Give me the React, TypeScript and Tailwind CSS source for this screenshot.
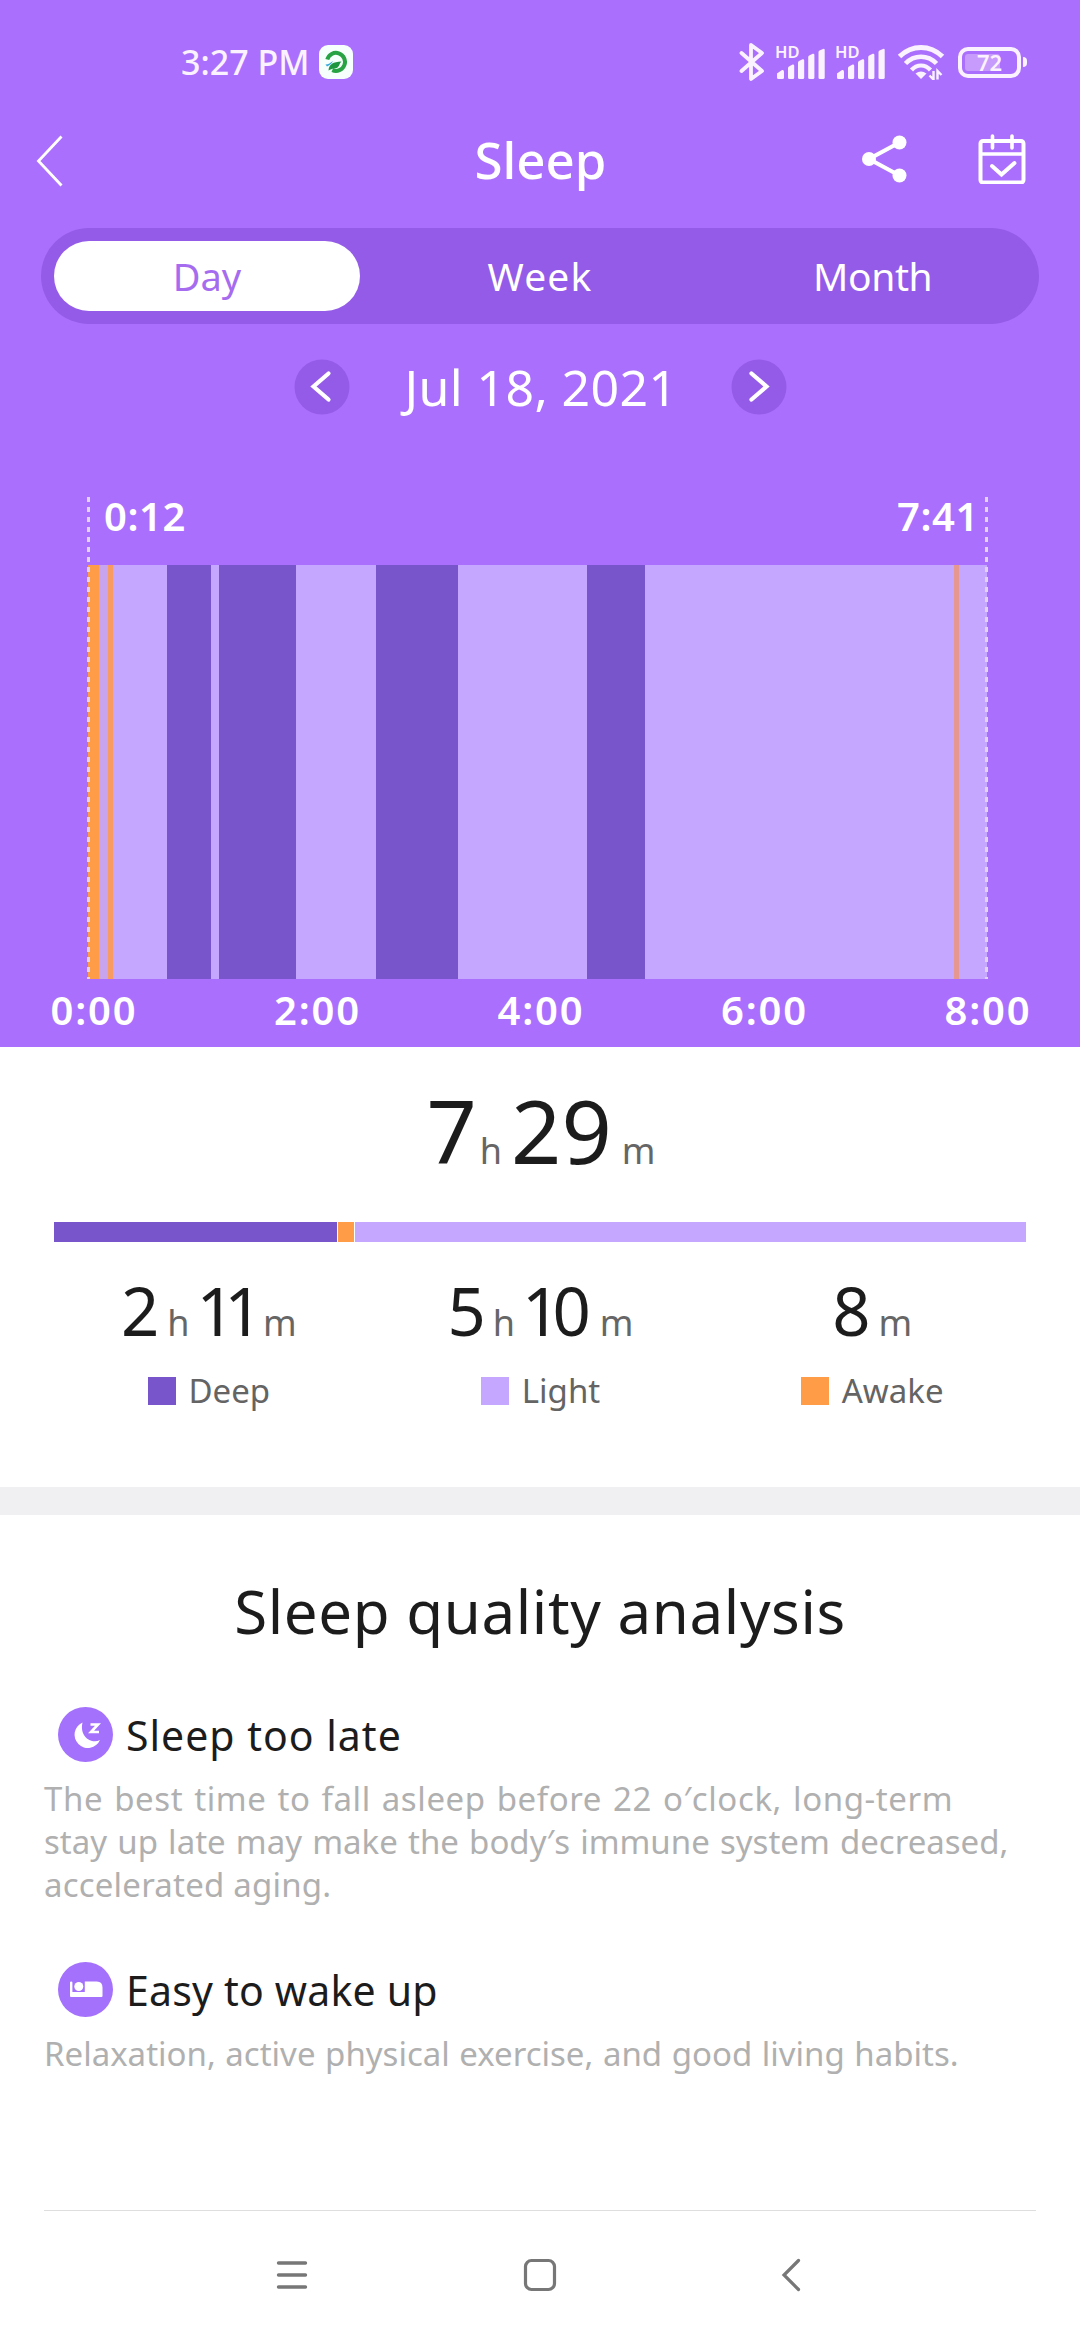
import type { ReactNode } from "react";

function AppBadge() {
  return (
    <svg className="h-[34px] w-[34px]" viewBox="0 0 34 34">
      <rect width="34" height="34" rx="9" fill="#f6fffb" />
      <path d="M8.300 14.500a9 9 0 1 1 5 10.600" fill="none" stroke="#27a343" strokeWidth="4" />
      <path d="M9.500 25.500C10 19 14 17 22.500 16.500 20 18.500 21 20.500 18.500 22.500c-2 1.600-5 .5-9 3z" fill="#1f9540" />
      <path d="M6.500 19.500c3-.2 5-1.500 7.500-3.500-1 2.500-3.500 4.500-6 5.500z" fill="#35a8dc" />
    </svg>
  );
}

function Bluetooth() {
  return (
    <svg className="h-[40px] w-[26px]" viewBox="0 0 26 40" fill="none" stroke="#fbf2ff" strokeWidth="3.800" strokeLinejoin="round" strokeLinecap="round">
      <path d="M2.500 11 23 29 12 37V3l11 8L2.500 29" />
    </svg>
  );
}

function Signal() {
  return (
    <div className="relative h-[34px] w-[52px]">
      <span className="absolute top-0 left-0 text-[16.5px] leading-[14px] font-semibold">HD</span>
      <svg className="absolute bottom-0 left-[2px] h-[32px] w-[50px]" viewBox="0 0 50 32" fill="#fbf2ff">
        <path d="M0 30.500v-4l5-3.500q2-.5 2 1.500v6q0 1.500-1.500 1.500h-4Q0 32 0 30.500z" />
        <path d="M11 30.500V21q0-1 1-1.500l3.500-2q1.700-.4 1.700 1.200v11.800q0 1.500-1.500 1.500h-3.200Q11 32 11 30.500z" />
        <path d="M21 30.500V15.500q0-1 1-1.500l3.500-1.700q1.700-.4 1.700 1.200v17q0 1.500-1.500 1.500h-3.200q-1.500 0-1.500-1.500z" />
        <path d="M31.200 30.500V10q0-1 1-1.500l3.500-1.700q1.700-.4 1.700 1.200v22.500q0 1.500-1.500 1.500h-3.200q-1.500 0-1.500-1.500z" />
        <path d="M41.500 30.500V5q0-1 1-1.500L46 1.900q1.700-.4 1.700 1.200v27.400q0 1.500-1.500 1.500H43q-1.500 0-1.500-1.500z" />
      </svg>
    </div>
  );
}

function Wifi() {
  return (
    <svg className="h-[36px] w-[48px]" viewBox="0 0 48 36" fill="none" stroke="#fbf2ff">
      <path d="M2.500 12.500Q12 3.500 24 3.500t21.500 9" strokeWidth="5" />
      <path d="M8.500 19.500Q15 12.800 24 12.800t15.500 6.700" strokeWidth="4.600" />
      <path d="M14.500 26Q18.500 21.500 24 21.500t9.500 4.500" strokeWidth="4.200" />
      <path d="M18.500 29.500q5.500-4 11 0L24 35z" fill="#fbf2ff" stroke="none" />
      <path d="M36.500 27v8.500l-4-4M40.500 35.500V27l4 4" strokeWidth="2.400" />
    </svg>
  );
}

function Battery() {
  return (
    <div className="flex items-center gap-[2px]">
      <div className="flex h-[31px] w-[63px] rounded-[10px] border-4 border-[#fbf2ff] p-[3px]">
        <div className="relative flex h-full w-full items-center justify-center">
          <div className="absolute inset-y-0 left-0 w-[35px] rounded-[3px] bg-[#c69bfb]" />
          <span className="relative text-[22px] leading-none font-semibold">72</span>
        </div>
      </div>
      <div className="h-[10px] w-[4px] rounded-r-sm bg-[#fbf2ff]" />
    </div>
  );
}

function StatusBar() {
  return (
    <div className="flex h-[124px] items-center pr-[53px] pl-[181px] text-[#fbf2ff]">
      <span className="w-[138px] text-[34px] leading-none font-medium whitespace-nowrap">3:27 PM</span>
      <AppBadge />
      <div className="ml-auto flex items-center">
        <Bluetooth />
        <div className="ml-[10px]"><Signal /></div>
        <div className="ml-[8px]"><Signal /></div>
        <div className="ml-[10px]"><Wifi /></div>
        <div className="ml-[13px]"><Battery /></div>
      </div>
    </div>
  );
}

function Header() {
  return (
    <header className="grid h-[70px] grid-cols-3 items-center pr-[54px] pl-[36px]">
      <svg className="mt-[4px] h-[52px] w-[28px]" viewBox="0 0 28 52" fill="none" stroke="#fff" strokeWidth="2.800">
        <path d="M25.500 1.500 2.500 26l23 24.500" />
      </svg>
      <h1 className="pl-[19px] text-center text-[51px] leading-none font-medium">Sleep</h1>
      <div className="flex items-center justify-end gap-[70px]">
        <svg className="h-[50px] w-[48px]" viewBox="0 0 48 50" fill="#fff">
          <path d="M39.500 8.500 9 25l30.500 16.500" fill="none" stroke="#fff" strokeWidth="4.200" />
          <circle cx="39.500" cy="8.500" r="7" />
          <circle cx="9" cy="25" r="7" />
          <circle cx="39.500" cy="41.500" r="7" />
        </svg>
        <svg className="h-[50px] w-[48px]" viewBox="0 0 48 50" fill="none" stroke="#fff" strokeWidth="4">
          <rect x="2.500" y="7" width="43" height="41.500" rx="2.500" />
          <path d="M2.500 20h43" strokeWidth="3.600" />
          <path d="M14.500 2v12M34 2v12" strokeLinecap="round" strokeWidth="3.600" />
          <path d="m14 32 9.500 8.500L36.500 29" strokeLinecap="round" />
        </svg>
      </div>
    </header>
  );
}

function Tabs() {
  return (
    <nav className="mx-[41px] mt-[34px] grid h-[96px] grid-cols-3 items-center rounded-full bg-[#945be8] text-center text-[39px]">
      <div className="ml-[13px] h-[70px] w-[306px] rounded-full bg-white text-[38px] leading-[70px] text-[#a66cf0]">Day</div>
      <div className="leading-[70px] tracking-[1.2px]">Week</div>
      <div className="leading-[70px] tracking-[-0.4px]">Month</div>
    </nav>
  );
}

function Round({ d }: { d: string }) {
  return (
    <svg className="h-[56px] w-[56px]" viewBox="0 0 56 56" fill="none">
      <circle cx="28" cy="28" r="27.500" fill="#945be8" />
      <path d={d} stroke="#fff" strokeWidth="4.200" strokeLinecap="round" />
    </svg>
  );
}

function DateRow() {
  return (
    <div className="mt-[35px] flex h-[55px] items-center justify-center">
      <Round d="M34.500 14.500 19.500 27.500l15 13" />
      <span className="w-[381px] pl-[2px] text-center text-[50px] leading-none tracking-[0.4px] whitespace-nowrap">Jul 18, 2021</span>
      <Round d="M20.500 14.500 35.500 27.500l-15 13" />
    </div>
  );
}

const DEEP = "bg-[#7855cb]";
const LIGHT = "bg-[#c5a7ff]";
const AWAKE = "bg-[#ff9c48]";

/* Sleep stages from left to right: [colour class, width] */
const stages: [string, number][] = [
  [AWAKE, 11], ["bg-[#c8a4ee]", 8.5], ["bg-[#f79b62]", 5.5], [LIGHT, 54], [DEEP, 44], [LIGHT, 8],
  [DEEP, 77], [LIGHT, 80], [DEEP, 81.500], [LIGHT, 129], [DEEP, 58], [LIGHT, 309.5],
  ["bg-[#e6978f]", 5], [LIGHT, 28],
];

function Dotted() {
  return <div className="h-full w-[3px] bg-[repeating-linear-gradient(to_bottom,#e0d3ea_0_5px,transparent_5px_10px)]" />;
}

function Chart() {
  return (
    <section>
      <div className="relative mt-[83px] mr-[92px] ml-[87px]">
        <div className="flex h-[37px] justify-between pr-[9px] pl-[17px] text-[40px] leading-[38px] font-semibold tracking-[0.6px]">
          <span>0:12</span>
          <span>7:41</span>
        </div>
        <div className="mt-[31px] flex h-[414px] px-[1px]">
          {stages.map(([color, width], i) => (
            <div key={i} className={color} style={{ flexGrow: width, flexBasis: 0 }} />
          ))}
        </div>
        <div className="absolute inset-0 flex justify-between"><Dotted /><Dotted /></div>
      </div>
      <div className="flex h-[68px] justify-between pr-[47px] pl-[49px] text-[40px] leading-[62px] font-semibold tracking-[1.8px]">
        {["0:00", "2:00", "4:00", "6:00", "8:00"].map((t) => (
          <span key={t} className="w-[90px] text-center whitespace-nowrap">{t}</span>
        ))}
      </div>
    </section>
  );
}

function Unit({ children, className }: { children: string; className: string }) {
  return <span className={`text-[36px] text-[#666] ${className}`}>{children}</span>;
}

function Legend({ color, label, value }: { color: string; label: string; value: ReactNode }) {
  return (
    <div className="flex flex-col items-center">
      <div className="flex h-[67px] items-baseline text-[67px] leading-none">{value}</div>
      <div className="mt-[33px] flex h-[28px] items-center gap-[13px]">
        <div className={`h-[28px] w-[28px] ${color}`} />
        <span className="text-[33px] leading-[28px] text-[#646464]">{label}</span>
      </div>
    </div>
  );
}

function Summary() {
  return (
    <section className="h-[440px] pt-[39px]">
      <div className="flex h-[88px] items-baseline justify-center pl-[2px] text-[88px] leading-none">
        <span>7</span>
        <Unit className="mr-[9px] ml-[3px]">h</Unit>
        <span>29</span>
        <Unit className="ml-[10px]">m</Unit>
      </div>
      <div className="mx-[54px] mt-[48px] flex h-[20px]">
        <div className="w-[283px] bg-[#7855cb]" />
        <div className="mx-px w-[16px] bg-[#ff9c48]" />
        <div className="flex-1 bg-[#c5a7ff]" />
      </div>
      <div className="mr-[42px] ml-[43px] mt-[35px] grid grid-cols-3">
        <Legend color={DEEP} label="Deep" value={<><span>2</span><Unit className="mr-[7px] ml-[8px]">h</Unit><span className="tracking-[-10.5px]">11</span><Unit className="ml-[11px]">m</Unit></>} />
        <Legend color={LIGHT} label="Light" value={<><span>5</span><Unit className="mr-[7px] ml-[7px]">h</Unit><span className="tracking-[-8px]">10</span><Unit className="ml-[17px]">m</Unit></>} />
        <Legend color={AWAKE} label="Awake" value={<><span>8</span><Unit className="ml-[8px]">m</Unit></>} />
      </div>
    </section>
  );
}

function Advice({ icon, title, children }: { icon: ReactNode; title: ReactNode; children: ReactNode }) {
  return (
    <article className="mt-[56px] pl-[44px]">
      <div className="flex h-[55px] items-center gap-[13px] pl-[14px] text-[41px]">
        {icon}
        <h3 className="leading-[56px] whitespace-nowrap">{title}</h3>
      </div>
      <p className="mt-[15px] text-[33px] leading-[43px] whitespace-nowrap text-[#b0b0b0]">{children}</p>
    </article>
  );
}

function MoonIcon() {
  return (
    <svg className="h-[55px] w-[55px]" viewBox="0 0 55 55">
      <circle cx="27.500" cy="27.500" r="27.500" fill="#a471fd" />
      <path d="M24.500 15.500a13.300 13.300 0 1 0 17.500 17.500c-8 4.500-21-3-17.500-17.500z" fill="#fff" />
      <path d="M32.500 17.500h7.500l-7 7.500h8" fill="none" stroke="#fff" strokeWidth="2.600" />
    </svg>
  );
}

function BedIcon() {
  return (
    <svg className="h-[55px] w-[55px]" viewBox="0 0 55 55">
      <circle cx="27.500" cy="27.500" r="27.500" fill="#a471fd" />
      <path d="M12 20.500q0-1 1.200-1t1.200 1V30h12.400V19.500h12q5.700 0 5.700 6V34q0 1-1 1H13q-1 0-1-1z" fill="#fff" />
      <circle cx="20.800" cy="24.500" r="4.500" fill="#fff" />
    </svg>
  );
}

function NavBar() {
  return (
    <footer className="mx-[44px] mt-[135px] border-t border-[#dedede]">
      <div className="grid h-[127px] grid-cols-[1fr_auto_1fr] items-center">
        <svg className="ml-[231px] h-[34px] w-[34px]" viewBox="0 0 34 34" stroke="#777" strokeWidth="3.400" strokeLinecap="round">
          <path d="M3.500 5h27M3.500 17h27M3.500 29h27" />
        </svg>
        <svg className="h-[34px] w-[34px]" viewBox="0 0 34 34" fill="none" stroke="#777" strokeWidth="3.200">
          <rect x="2.500" y="2.500" width="29" height="29" rx="6" />
        </svg>
        <svg className="mr-[234px] h-[34px] w-[22px] justify-self-end" viewBox="0 0 22 34" fill="none" stroke="#777" strokeWidth="3.200" strokeLinecap="round">
          <path d="M18.500 2.500 4 17l14.500 14.500" />
        </svg>
      </div>
    </footer>
  );
}

export default function App() {
  return (
    <div className="h-[2340px] w-[1080px] overflow-hidden bg-white font-['Noto_Sans',sans-serif] text-[#1c1c1c]">
      <div className="h-[1047px] bg-[#ab6ffd] text-white">
        <StatusBar />
        <Header />
        <Tabs />
        <DateRow />
        <Chart />
      </div>
      <Summary />
      <div className="h-[28px] bg-[#f0f0f3]" />
      <h2 className="mt-[56px] text-center text-[60px] leading-[80px] tracking-[0.6px]">Sleep quality analysis</h2>
      <Advice icon={<MoonIcon />} title={<span className="tracking-[1px]">Sleep too late</span>}>
        <span className="block tracking-[0.6px] [word-spacing:1.8px]">The best time to fall asleep before 22 o′clock, long-term</span>
        <span className="block [word-spacing:1.6px]">stay up late may make the body′s immune system decreased,</span>
        <span className="block tracking-[0.2px]">accelerated aging.</span>
      </Advice>
      <Advice icon={<BedIcon />} title={<span className="tracking-[0.2px]">Easy to wake up</span>}>
        <span className="block [word-spacing:1px]">Relaxation, active physical exercise, and good living habits.</span>
      </Advice>
      <NavBar />
    </div>
  );
}
